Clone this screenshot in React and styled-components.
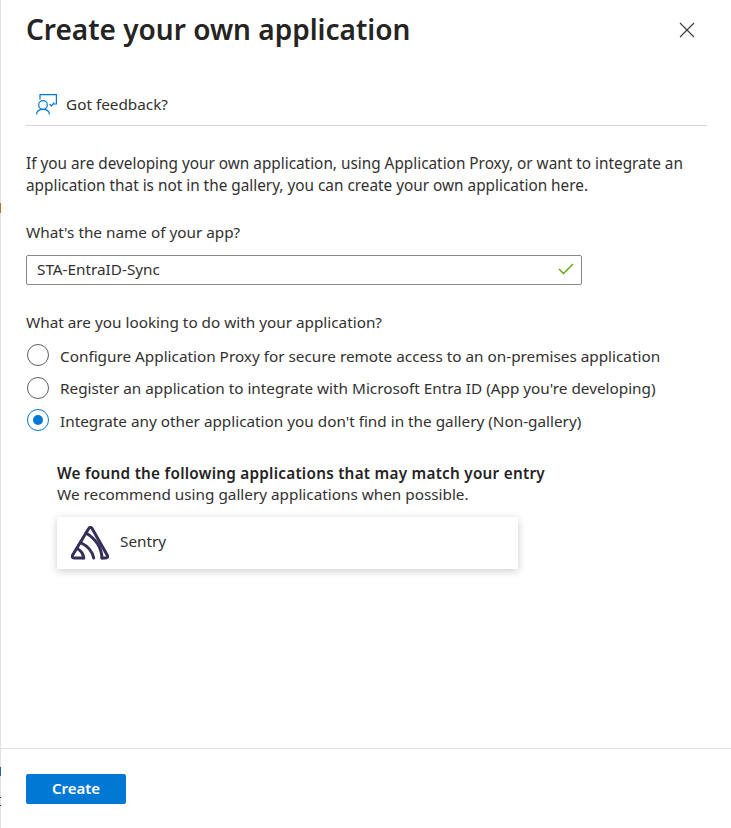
import React from "react";
import styled, { createGlobalStyle } from "styled-components";

const GlobalStyle = createGlobalStyle`
  html, body {
    margin: 0;
    padding: 0;
    background: #fff;
  }
  body {
    font-family: "Noto Sans", "Open Sans", sans-serif;
    color: #323130;
  }
`;

const Panel = styled.div`
  position: relative;
  width: 731px;
  height: 828px;
  box-sizing: border-box;
  padding-left: 1px;
  box-shadow: inset 1px 0 0 #e1e1e1;
  display: flex;
  flex-direction: column;
  background: #fff;
  overflow: hidden;
`;

// slivers of the page behind the panel, showing along its left edge
const EdgeMark = styled.span`
  position: absolute;
  left: 0;
  width: 1px;
  top: ${(p) => p.$top}px;
  height: ${(p) => p.$height}px;
  background: ${(p) => p.$color};
`;

const Main = styled.div`
  flex: 1;
  padding: 0 25px;
`;

const Header = styled.div`
  height: 86px;
  display: flex;
  justify-content: space-between;
  align-items: flex-start;
`;

const Title = styled.h1`
  margin: 10px 0 0;
  font-size: 28px;
  line-height: 38px;
  font-weight: 600;
  color: #252423;
`;

const CloseButton = styled.button`
  border: 0;
  background: none;
  padding: 0;
  margin: 22px 11px 0 0;
  width: 16px;
  height: 16px;
  display: flex;
`;

const FeedbackBar = styled.div`
  height: 40px;
  width: 681px;
  box-sizing: border-box;
  border-bottom: 1px solid #d6d6d6;
  display: flex;
  align-items: center;
  gap: 9px;
  padding: 0 0 3px 10px;
  font-size: 15.3px;
  margin-bottom: 27px;
`;

const Intro = styled.p`
  margin: 0 0 26px;
  font-size: 15.33px;
  line-height: 21.5px;
  width: 681px;
`;

const FieldLabel = styled.div`
  font-size: 15.3px;
  line-height: 21px;
  margin-bottom: 12px;
`;

const InputBox = styled.div`
  width: 556px;
  height: 30px;
  box-sizing: border-box;
  border: 1px solid #8a8886;
  border-radius: 2px;
  display: flex;
  align-items: center;
  justify-content: space-between;
  padding: 0 7px 2px 10px;
  font-size: 15.3px;
  margin-bottom: 27px;
`;

const RadioGroup = styled.div`
  display: flex;
  flex-direction: column;
  gap: 10.5px;
  margin-top: -1px;
`;

const RadioRow = styled.div`
  display: flex;
  align-items: center;
  gap: 11px;
  height: 22px;
  font-size: 15.3px;
`;

const RadioLabel = styled.span`
  padding-top: 1px;
`;

const RadioCircle = styled.span`
  width: 22px;
  height: 22px;
  margin-left: 1px;
  box-sizing: border-box;
  border-radius: 50%;
  border: 1.5px solid ${(p) => (p.$checked ? "#0078d4" : "#605e5c")};
  display: flex;
  align-items: center;
  justify-content: center;
  flex-shrink: 0;

  &::after {
    content: "";
    display: ${(p) => (p.$checked ? "block" : "none")};
    width: 10px;
    height: 10px;
    border-radius: 50%;
    background: #0078d4;
  }
`;

const Suggestions = styled.div`
  margin: 32px 0 0 31px;
`;

const SuggestTitle = styled.div`
  font-size: 15.3px;
  line-height: 21px;
  font-weight: 600;
  letter-spacing: 0.25px;
  color: #252423;
`;

const SuggestHint = styled.div`
  font-size: 15.3px;
  line-height: 21px;
  margin-bottom: 12px;
`;

const AppCard = styled.div`
  width: 461px;
  height: 52px;
  display: flex;
  align-items: center;
  gap: 11px;
  padding-left: 14px;
  box-sizing: border-box;
  background: #fff;
  box-shadow: 0 2px 8px rgba(0, 0, 0, 0.2);
  font-size: 15.3px;
`;

const AppName = styled.span`
  padding-bottom: 5px;
`;

const Footer = styled.div`
  height: 80px;
  box-sizing: border-box;
  border-top: 1px solid #e0e0e0;
  padding: 25px 0 0 25px;
`;

const PrimaryButton = styled.button`
  width: 100px;
  height: 30px;
  border: 0;
  border-radius: 2px;
  padding: 0 0 2px;
  background: #0078d4;
  color: #fff;
  font-family: inherit;
  font-size: 15px;
  font-weight: 600;
`;

const FeedbackIcon = () => (
  <svg width="21" height="21" viewBox="0 0 21 21" fill="none" stroke="#0078d4" strokeWidth="1.2">
    <circle cx="7" cy="11" r="4.3" />
    <path d="M.6 20.500c0-3.400 2.800-5.200 6.400-5.200s6.400 1.800 6.400 5.200" />
    <path d="M4 5.500V.6h16.400V10h-3.400" />
    <path d="M13.500 10l2 2 2.500-3.500" />
  </svg>
);

const CloseIcon = () => (
  <svg width="16" height="16" viewBox="0 0 16 16" stroke="#3b3a39" strokeWidth="1.1">
    <path d="M1 1l14 14M15 1L1 15" />
  </svg>
);

const CheckIcon = () => (
  <svg width="16" height="12" viewBox="0 0 16 12" fill="none" stroke="#57a300" strokeWidth="1.3">
    <path d="M1 6l4.500 4.500L15 1" />
  </svg>
);

const SentryLogo = () => (
  <svg width="38" height="34" viewBox="0 0 38 34" fill="none" stroke="#362d59" strokeWidth="3" strokeLinejoin="round" strokeLinecap="round">
    <path d="M12.700 32H3c-1.500 0-2.300-1.200-1.600-2.400L17.700 2.500c.8-1.400 2.600-1.400 3.400 0l15.300 27.100c.7 1.200-.1 2.400-1.600 2.400H31" />
    <path d="M6 22.500c3.900 2 6.300 5.500 6.700 9.500" />
    <path d="M9.500 16.500c7 3.500 12 9 13.200 15.500" />
    <path d="M15 7c9 5.500 15.500 14.500 16 25" />
  </svg>
);

const options = [
  { label: "Configure Application Proxy for secure remote access to an on-premises application" },
  { label: "Register an application to integrate with Microsoft Entra ID (App you're developing)" },
  { label: "Integrate any other application you don't find in the gallery (Non-gallery)", checked: true },
];

const edgeMarks = [
  { top: 203, height: 10, color: "#b8732c" },
  { top: 767, height: 9, color: "#2a5fb0" },
  { top: 797, height: 1, color: "#222" },
  { top: 805, height: 1, color: "#222" },
];

const App = () => {
  return (
    <Panel>
      <GlobalStyle />
      {edgeMarks.map((mark) => (
        <EdgeMark key={mark.top} $top={mark.top} $height={mark.height} $color={mark.color} />
      ))}
      <Main>
        <Header>
          <Title>Create your own application</Title>
          <CloseButton type="button">
            <CloseIcon />
          </CloseButton>
        </Header>
        <FeedbackBar>
          <FeedbackIcon />
          Got feedback?
        </FeedbackBar>
        <Intro>
          If you are developing your own application, using Application Proxy, or want to integrate an
          application that is not in the gallery, you can create your own application here.
        </Intro>
        <FieldLabel>What's the name of your app?</FieldLabel>
        <InputBox>
          STA-EntraID-Sync
          <CheckIcon />
        </InputBox>
        <FieldLabel>What are you looking to do with your application?</FieldLabel>
        <RadioGroup>
          {options.map((option) => (
            <RadioRow key={option.label}>
              <RadioCircle $checked={option.checked} />
              <RadioLabel>{option.label}</RadioLabel>
            </RadioRow>
          ))}
        </RadioGroup>
        <Suggestions>
          <SuggestTitle>We found the following applications that may match your entry</SuggestTitle>
          <SuggestHint>We recommend using gallery applications when possible.</SuggestHint>
          <AppCard>
            <SentryLogo />
            <AppName>Sentry</AppName>
          </AppCard>
        </Suggestions>
      </Main>
      <Footer>
        <PrimaryButton type="button">Create</PrimaryButton>
      </Footer>
    </Panel>
  );
};

export default App;
